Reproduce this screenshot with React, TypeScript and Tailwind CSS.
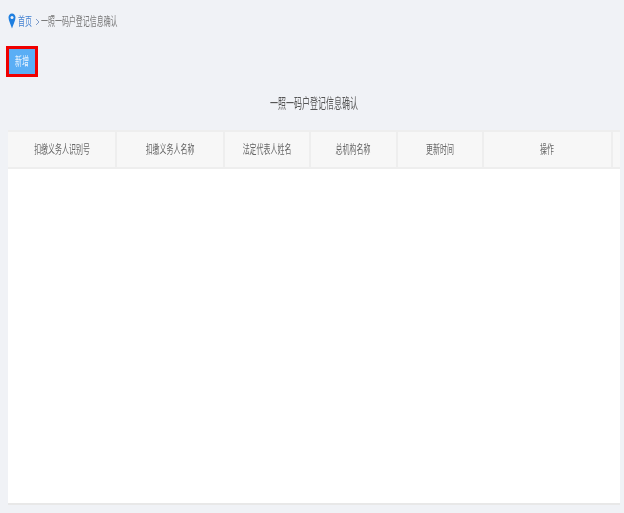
const columns = [
  { label: '扣缴义务人识别号', width: 'w-[109px] pl-[2px]' },
  { label: '扣缴义务人名称', width: 'w-[108px]' },
  { label: '法定代表人姓名', width: 'w-[86px]' },
  { label: '总机构名称', width: 'w-[87px]' },
  { label: '更新时间', width: 'w-[86px]' },
  { label: '操作', width: 'w-[129px]' },
];

const fontStack = "font-['Liberation_Sans','Noto_Sans_CJK_SC',sans-serif]";
const squeezed = 'shrink-0 scale-x-[0.58] whitespace-nowrap blur-[0.3px]';

export default function App() {
  return (
    <div className={`flex h-[513px] w-[624px] flex-col overflow-hidden bg-[#f0f2f6] pr-1 pl-2 ${fontStack}`}>
      <div className="flex h-[46px] shrink-0 items-center pb-[4px] text-[12px] text-[#777]">
        <svg width="8" height="16" viewBox="0 0 8 16" className="shrink-0">
          <path
            d="M4 0.5C1.9 0.5 0.5 2.3 0.5 4.6C0.5 7.6 2.9 12 4 15.5C5.1 12 7.5 7.6 7.5 4.6C7.5 2.3 6.1 0.5 4 0.5Z"
            fill="#1f7fe0"
          />
          <circle cx="4" cy="4.6" r="1.5" fill="#f0f2f6" />
        </svg>
        <div className="ml-[2px] flex w-[14px] justify-center">
          <span className={`${squeezed} mt-[2px] text-[#3f7fd0]`}>首页</span>
        </div>
        <svg width="5" height="8" viewBox="0 0 5 8" className="mt-[2px] ml-[3px] shrink-0">
          <path d="M1 1L4 4L1 7" fill="none" stroke="#7f9cc8" strokeWidth="1" />
        </svg>
        <span className="mt-[2px] ml-[1px] origin-left scale-x-[0.58] whitespace-nowrap blur-[0.3px]">
          一照一码户登记信息确认
        </span>
      </div>

      <div className="ml-[-2px] flex h-[31px] w-[32px] shrink-0 items-center justify-center border-[3px] border-[#f00000] bg-[#5aaef5] pl-[1px] text-[12px] text-[#e8f3fe]">
        <span className={squeezed}>新增</span>
      </div>

      <div className="flex h-[53px] shrink-0 items-center justify-center text-[14px] text-[#555]">
        <span className="scale-x-[0.57] whitespace-nowrap blur-[0.3px]">一照一码户登记信息确认</span>
      </div>

      <div className="flex h-[375px] w-[612px] flex-col border-b-2 border-[#e8e8e8] bg-white">
        <div className="flex h-[39px] shrink-0 border-y-2 border-[#eeeeee] bg-[#f7f7f7] text-[12px] text-[#666]">
          {columns.map((column) => (
            <div
              key={column.label}
              className={`flex items-center justify-center overflow-hidden border-r-2 border-[#eeeeee] ${column.width}`}
            >
              <span className={squeezed}>{column.label}</span>
            </div>
          ))}
          <div className="flex-1" />
        </div>
      </div>
    </div>
  );
}
